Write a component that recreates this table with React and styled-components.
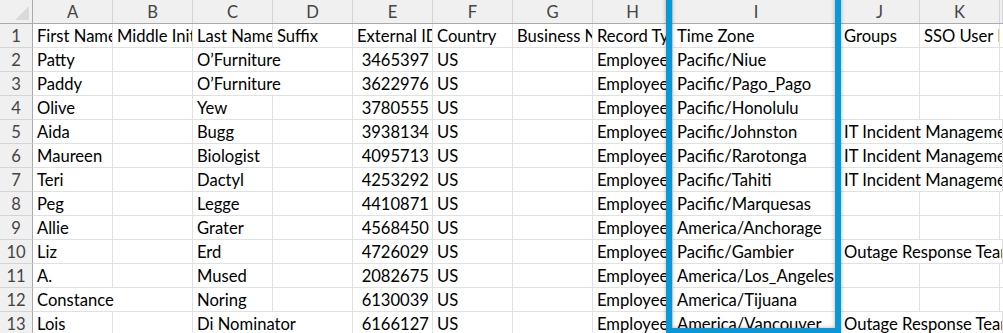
import React from "react";
import styled, { createGlobalStyle } from "styled-components";

const GlobalStyle = createGlobalStyle`
  html, body {
    margin: 0;
    padding: 0;
    background: #ffffff;
    overflow: hidden;
  }
  body {
    font-family: "Lato", "Open Sans", sans-serif;
  }
`;

const COLS = "33px repeat(8, 80px) 167px 80px 80px 1fr";

const Sheet = styled.div`
  position: relative;
  width: 1003px;
  height: 333px;
  overflow: hidden;
  background: #fff;
  color: #000;
  font-size: 16.6px;
`;

const Row = styled.div`
  display: grid;
  grid-template-columns: ${COLS};
  height: 24px;
`;

const HeaderRow = styled(Row)`
  background: #f0f0f0;
  border-bottom: 1px solid #ababab;
  height: 24px;
  box-sizing: border-box;
`;

const Corner = styled.div`
  position: relative;
  border-right: 1px solid #ababab;

  &::after {
    content: "";
    position: absolute;
    right: 3px;
    bottom: 3px;
    width: 14px;
    height: 14px;
    background: #dadada;
    clip-path: polygon(100% 0, 100% 100%, 0 100%);
  }
`;

const ColLetter = styled.div`
  display: flex;
  align-items: center;
  justify-content: center;
  border-right: 1px solid #d4d4d4;
  color: #444;
  font-size: 16.6px;
`;

const RowNum = styled.div`
  display: flex;
  align-items: center;
  justify-content: center;
  background: #f0f0f0;
  border-right: 1px solid #ababab;
  border-bottom: 1px solid #d4d4d4;
  color: #444;
  font-size: 16.6px;
  box-sizing: border-box;
`;

const Cell = styled.div`
  grid-column: span ${({ $span }) => $span || 1};
  display: flex;
  align-items: center;
  justify-content: ${({ $num }) => ($num ? "flex-end" : "flex-start")};
  padding: 1px ${({ $num }) => ($num ? "3px" : "0")} 0 ${({ $num }) => ($num ? "0" : "4px")};
  border-right: 1px solid #e1e1e1;
  border-bottom: 1px solid #e1e1e1;
  box-sizing: border-box;
  white-space: nowrap;
  overflow: hidden;
  min-width: 0;
`;

const Highlight = styled.div`
  position: absolute;
  left: 666px;
  top: -12px;
  width: 175px;
  height: 346px;
  box-sizing: border-box;
  border: 6px solid #0898d8;
  box-shadow: 0 0 4px rgba(0, 0, 0, 0.3), inset 0 0 4px rgba(0, 0, 0, 0.3);
  pointer-events: none;
`;

const letters = ["A", "B", "C", "D", "E", "F", "G", "H", "I", "J", "K", ""];

// [text, span] pairs; a spanned cell swallows the empty cells after it
const rows = [
  [["First Name"], ["Middle Initial"], ["Last Name"], ["Suffix"], ["External ID"], ["Country"], ["Business Name"], ["Record Type"], ["Time Zone"], ["Groups"], ["SSO User ID"], [""]],
  [["Patty"], [""], ["O’Furniture", 2], ["3465397"], ["US"], [""], ["Employee"], ["Pacific/Niue"], [""], [""], [""]],
  [["Paddy"], [""], ["O’Furniture", 2], ["3622976"], ["US"], [""], ["Employee"], ["Pacific/Pago_Pago"], [""], [""], [""]],
  [["Olive"], [""], ["Yew"], [""], ["3780555"], ["US"], [""], ["Employee"], ["Pacific/Honolulu"], [""], [""], [""]],
  [["Aida"], [""], ["Bugg"], [""], ["3938134"], ["US"], [""], ["Employee"], ["Pacific/Johnston"], ["IT Incident Management", 3]],
  [["Maureen"], [""], ["Biologist"], [""], ["4095713"], ["US"], [""], ["Employee"], ["Pacific/Rarotonga"], ["IT Incident Management", 3]],
  [["Teri"], [""], ["Dactyl"], [""], ["4253292"], ["US"], [""], ["Employee"], ["Pacific/Tahiti"], ["IT Incident Management", 3]],
  [["Peg"], [""], ["Legge"], [""], ["4410871"], ["US"], [""], ["Employee"], ["Pacific/Marquesas"], [""], [""], [""]],
  [["Allie"], [""], ["Grater"], [""], ["4568450"], ["US"], [""], ["Employee"], ["America/Anchorage"], [""], [""], [""]],
  [["Liz"], [""], ["Erd"], [""], ["4726029"], ["US"], [""], ["Employee"], ["Pacific/Gambier"], ["Outage Response Team", 3]],
  [["A."], [""], ["Mused"], [""], ["2082675"], ["US"], [""], ["Employee"], ["America/Los_Angeles"], [""], [""], [""]],
  [["Constance", 2], ["Noring"], [""], ["6130039"], ["US"], [""], ["Employee"], ["America/Tijuana"], [""], [""], [""]],
  [["Lois"], [""], ["Di Nominator", 2], ["6166127"], ["US"], [""], ["Employee"], ["America/Vancouver"], ["Outage Response Team", 3]],
];

const isNum = (t) => /^\d+$/.test(t);

export default function App() {
  return (
    <>
      <GlobalStyle />
      <Sheet>
        <HeaderRow>
          <Corner />
          {letters.map((l, i) => (
            <ColLetter key={i}>{l}</ColLetter>
          ))}
        </HeaderRow>
        {rows.map((cells, r) => (
          <Row key={r}>
            <RowNum>{r + 1}</RowNum>
            {cells.map(([text, span], c) => (
              <Cell key={c} $span={span} $num={isNum(text)}>
                {text}
              </Cell>
            ))}
          </Row>
        ))}
        <Highlight />
      </Sheet>
    </>
  );
}
